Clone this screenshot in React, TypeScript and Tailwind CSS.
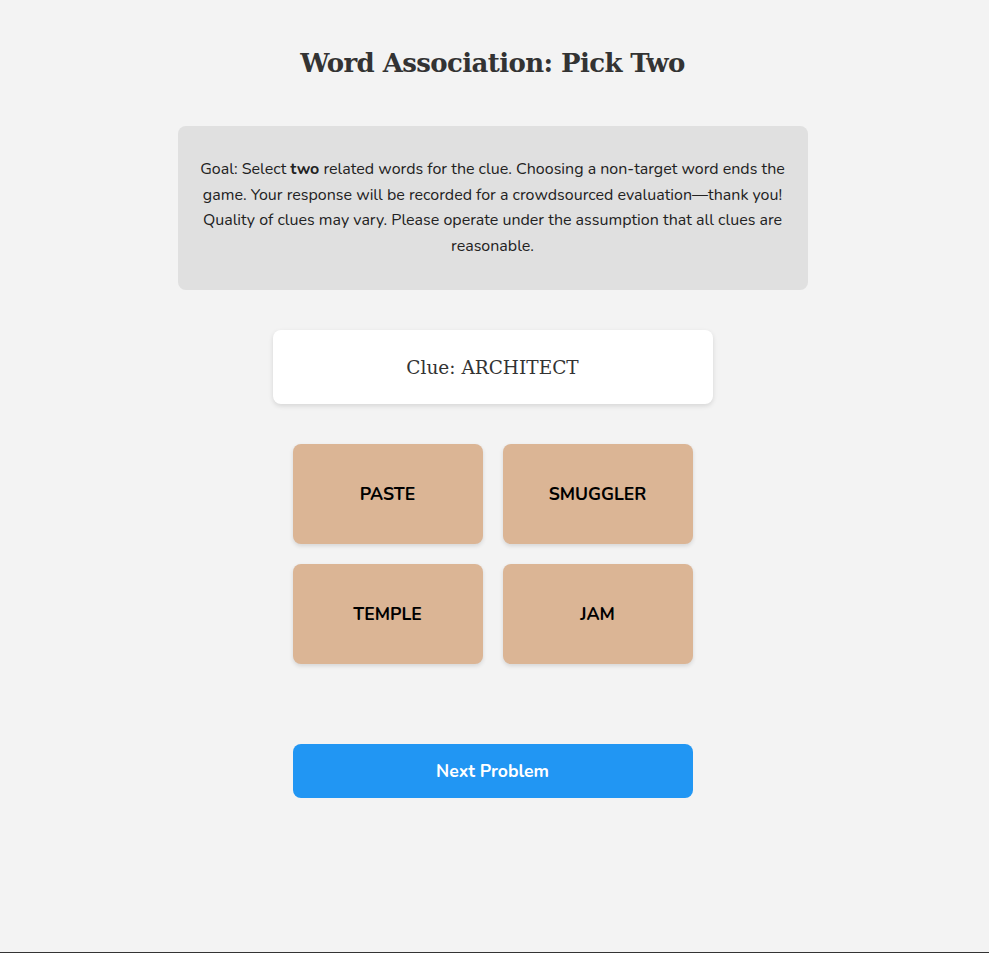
export default function App() {
  const words = ["PASTE", "SMUGGLER", "TEMPLE", "JAM"];

  return (
    <div className="min-h-[953px] w-full bg-[#f3f3f3] border-b border-[#333] pr-[4px] flex flex-col items-center font-['Nunito','Noto_Sans',sans-serif]">
      {/* Title */}
      <h1 className="mt-[44px] text-[26px] leading-[38px] font-bold text-[#333] font-['DejaVu_Serif',serif] tracking-[-0.6px]">
        Word Association: Pick Two
      </h1>

      {/* Instructions */}
      <div className="mt-[44px] w-[630px] rounded-lg bg-[#e0e0e0] px-5 py-[31px] text-center text-[16px] leading-[25.6px] text-[#222]">
        Goal: Select <b>two</b> related words for the clue. Choosing a non-target word ends the game. Your
        response will be recorded for a crowdsourced evaluation—thank you! Quality of clues may vary. Please
        operate under the assumption that all clues are reasonable.
      </div>

      {/* Clue */}
      <div className="mt-10 flex h-[74px] w-[440px] items-center justify-center rounded-lg bg-white shadow-[0_2px_5px_rgba(0,0,0,0.12)]">
        <span className="text-[18.5px] text-[#333] font-['DejaVu_Serif',serif]">Clue: ARCHITECT</span>
      </div>

      {/* Word grid */}
      <div className="mt-10 grid grid-cols-2 gap-5">
        {words.map((w) => (
          <button
            key={w}
            className="flex h-[100px] w-[190px] items-center justify-center rounded-lg bg-[#dbb595] text-[17.6px] font-bold text-black shadow-[0_2px_4px_rgba(0,0,0,0.12)]"
          >
            {w}
          </button>
        ))}
      </div>

      {/* Next */}
      <button className="mt-20 h-[54px] w-[400px] rounded-lg bg-[#2196f3] text-[17.6px] font-bold text-white">
        Next Problem
      </button>
    </div>
  );
}
